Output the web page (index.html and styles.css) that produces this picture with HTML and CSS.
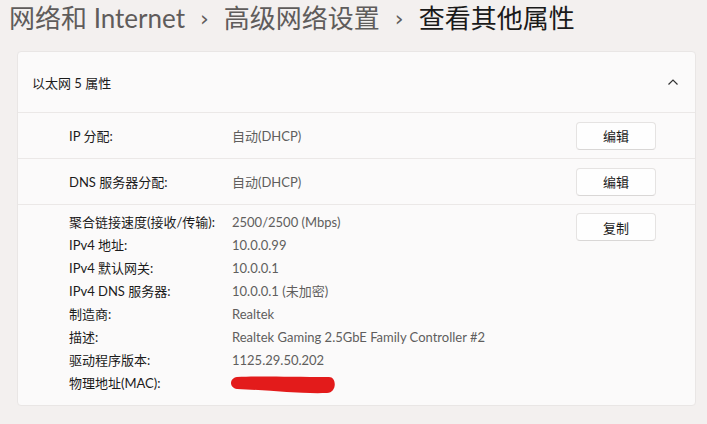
FILE: index.html
```html
<!DOCTYPE html>
<html lang="zh-CN">
<head>
  <meta charset="UTF-8">
  <title>查看其他属性</title>
  <link rel="stylesheet" href="styles.css">
</head>
<body>
  <!-- Breadcrumb -->
  <h1 class="crumbs">
    <span class="crumb">网络和 Internet</span>
    <span class="sep">›</span>
    <span class="crumb">高级网络设置</span>
    <span class="sep">›</span>
    <span class="crumb current">查看其他属性</span>
  </h1>

  <!-- Properties card -->
  <div class="card">
    <div class="card-header">
      <span>以太网 5 属性</span>
      <svg class="chevron" viewBox="0 0 12 8">
        <path d="M1.5 6.5 L6 2 L10.5 6.5" />
      </svg>
    </div>

    <div class="row">
      <div class="label">IP 分配:</div>
      <div class="value">自动(DHCP)</div>
      <button class="btn">编辑</button>
    </div>

    <div class="row">
      <div class="label">DNS 服务器分配:</div>
      <div class="value">自动(DHCP)</div>
      <button class="btn">编辑</button>
    </div>

    <div class="details">
      <div class="detail-list">
        <div class="label">聚合链接速度(接收/传输):</div><div class="value">2500/2500 (Mbps)</div>
        <div class="label">IPv4 地址:</div><div class="value">10.0.0.99</div>
        <div class="label">IPv4 默认网关:</div><div class="value">10.0.0.1</div>
        <div class="label">IPv4 DNS 服务器:</div><div class="value">10.0.0.1 (未加密)</div>
        <div class="label">制造商:</div><div class="value">Realtek</div>
        <div class="label">描述:</div><div class="value">Realtek Gaming 2.5GbE Family Controller #2</div>
        <div class="label">驱动程序版本:</div><div class="value">1125.29.50.202</div>
        <div class="label">物理地址(MAC):</div>
        <div class="value">
          <svg class="scribble" viewBox="0 0 108 20">
            <path d="M8 2 C30 1 60 2 100 2 C108 2 108 18 98 18 C70 19 40 15 8 14 C0 13 0 3 8 2 Z" />
          </svg>
        </div>
      </div>
      <button class="btn">复制</button>
    </div>
  </div>
</body>
</html>
```

FILE: styles.css
```css
/* General */
body {
  margin: 0;
  padding: 0;
  background-color: #f3f0ef;
  font-family: 'Lato', 'Noto Sans CJK SC', sans-serif;
  color: #1b1b1b;
  height: 424px;
  overflow: hidden;
}

/* Breadcrumb */
.crumbs {
  margin: 0;
  padding: 0 0 0 9px;
  height: 51px;
  box-sizing: border-box;
  font-size: 26px;
  font-weight: 400;
  line-height: 36px;
  display: flex;
  gap: 15px;
}
.crumb {
  color: #5f5c5b;
}
.crumb.current {
  color: #1a1a1a;
}
.sep {
  color: #5f5c5b;
  font-size: 22px;
  font-family: 'DejaVu Sans', sans-serif;
  padding-top: 1px;
}

/* Card */
.card {
  margin-left: 17px;
  width: 679px;
  height: 355px;
  box-sizing: border-box;
  background-color: #fbfafa;
  border: 1px solid #e9e6e5;
  border-radius: 4px;
  font-size: 13px;
}
.card-header {
  height: 60px;
  display: flex;
  align-items: center;
  justify-content: space-between;
  padding: 0 16px 0 14px;
  border-bottom: 1px solid #ebe8e7;
  color: #1b1b1b;
}
.chevron {
  width: 12px;
  height: 8px;
  fill: none;
  stroke: #333;
  stroke-width: 1.2;
}

/* Rows */
.row {
  height: 46px;
  box-sizing: border-box;
  display: flex;
  align-items: center;
  padding: 0 39px 0 51px;
  border-bottom: 1px solid #ebe8e7;
}
.label {
  width: 163px;
  color: #1b1b1b;
}
.value {
  flex: 1;
  color: #605e5d;
}
.btn {
  width: 80px;
  height: 28px;
  background-color: #fefefe;
  border: 1px solid #e5e3e2;
  border-bottom-color: #d9d7d6;
  border-radius: 4px;
  font-family: 'Noto Sans CJK SC', sans-serif;
  font-size: 13px;
  color: #1b1b1b;
}

/* Details list */
.details {
  display: flex;
  align-items: flex-start;
  padding: 5px 39px 0 51px;
}
.detail-list {
  flex: 1;
  display: grid;
  grid-template-columns: 163px 1fr;
  grid-auto-rows: 23px;
  align-items: center;
}
.details .btn {
  margin-top: 3px;
}
.scribble {
  display: block;
  width: 108px;
  height: 20px;
  margin: 5px 0 0 -3px;
  fill: #e31b1b;
}
```
